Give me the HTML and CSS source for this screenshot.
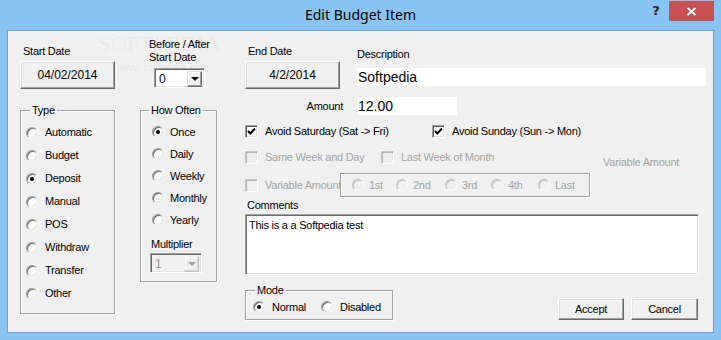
FILE: index.html
```html
<!DOCTYPE html>
<html>
<head>
<meta charset="utf-8">
<link rel="stylesheet" href="styles.css">
</head>
<body>
<div class="window">
  <div class="titlebar">
    <div class="title">Edit Budget Item</div>
    <div class="caption-btns">
      <div class="help">?</div>
      <div class="close">
        <svg width="11" height="9" viewBox="0 0 11 9"><path d="M1.5 1 L9.5 8 M9.5 1 L1.5 8" stroke="#fff" stroke-width="1.8" fill="none"/></svg>
      </div>
    </div>
  </div>

  <div class="client">
    <div class="col-left">
      <div class="top-block start-block">
        <div class="lbl start-lbl">Start Date</div>
        <div class="btn date-btn">04/02/2014</div>
      </div>
      <fieldset class="group type-group">
        <legend>Type</legend>
        <div class="opt"><span class="radio"></span><span>Automatic</span></div>
        <div class="opt"><span class="radio"></span><span>Budget</span></div>
        <div class="opt"><span class="radio checked"></span><span>Deposit</span></div>
        <div class="opt"><span class="radio"></span><span>Manual</span></div>
        <div class="opt"><span class="radio"></span><span>POS</span></div>
        <div class="opt"><span class="radio"></span><span>Withdraw</span></div>
        <div class="opt"><span class="radio"></span><span>Transfer</span></div>
        <div class="opt"><span class="radio"></span><span>Other</span></div>
      </fieldset>
    </div>

    <div class="col-mid">
      <div class="top-block ba-block">
        <div class="lbl ba-lbl">Before / After<br>Start Date</div>
        <div class="combo ba-combo"><span class="combo-val">0</span><span class="combo-btn"><span class="arrow"></span></span></div>
      </div>
      <fieldset class="group often-group">
        <legend>How Often</legend>
        <div class="opt"><span class="radio checked"></span><span>Once</span></div>
        <div class="opt"><span class="radio"></span><span>Daily</span></div>
        <div class="opt"><span class="radio"></span><span>Weekly</span></div>
        <div class="opt"><span class="radio"></span><span>Monthly</span></div>
        <div class="opt"><span class="radio"></span><span>Yearly</span></div>
        <div class="lbl mult-lbl">Multiplier</div>
        <div class="combo mult-combo disabled"><span class="combo-val">1</span><span class="combo-btn"><span class="arrow"></span></span></div>
      </fieldset>
    </div>

    <div class="col-right">
      <div class="row-a">
        <div class="end-col">
          <div class="lbl end-lbl">End Date</div>
          <div class="btn date-btn">4/2/2014</div>
        </div>
        <div class="desc-col">
          <div class="lbl desc-lbl">Description</div>
          <div class="field desc-field">Softpedia</div>
        </div>
      </div>

      <div class="amount-row">
        <div class="lbl amount-lbl">Amount</div>
        <div class="field amount-field">12.00</div>
      </div>

      <div class="chk-row row1">
        <div class="chk-item w187"><span class="checkbox"><svg width="9" height="9" viewBox="0 0 9 9"><polyline points="1,4 3.3,6.5 8,1.5" stroke="#000" stroke-width="1.9" fill="none"/></svg></span><span>Avoid Saturday (Sat -&gt; Fri)</span></div>
        <div class="chk-item"><span class="checkbox"><svg width="9" height="9" viewBox="0 0 9 9"><polyline points="1,4 3.3,6.5 8,1.5" stroke="#000" stroke-width="1.9" fill="none"/></svg></span><span>Avoid Sunday (Sun -&gt; Mon)</span></div>
      </div>

      <div class="chk-row row2">
        <div class="chk-item w136 dis"><span class="checkbox disabled"></span><span>Same Week and Day</span></div>
        <div class="chk-item w222 dis"><span class="checkbox disabled"></span><span>Last Week of Month</span></div>
        <div class="lbl dis var-lbl">Variable Amount</div>
      </div>

      <div class="chk-row row3">
        <div class="chk-item dis"><span class="checkbox disabled"></span><span class="clip-lbl">Variable Amount</span></div>
        <div class="nth-group">
          <div class="nth w44"><span class="radio disabled"></span><span>1st</span></div>
          <div class="nth w49"><span class="radio disabled"></span><span>2nd</span></div>
          <div class="nth w46"><span class="radio disabled"></span><span>3rd</span></div>
          <div class="nth w47"><span class="radio disabled"></span><span>4th</span></div>
          <div class="nth"><span class="radio disabled"></span><span>Last</span></div>
        </div>
      </div>

      <div class="lbl comments-lbl">Comments</div>
      <div class="textarea">This is a a Softpedia test</div>

      <div class="bottom-row">
        <fieldset class="group mode-group">
          <legend>Mode</legend>
          <div class="mode-opts">
            <div class="mode-opt w68"><span class="radio checked"></span><span>Normal</span></div>
            <div class="mode-opt"><span class="radio"></span><span>Disabled</span></div>
          </div>
        </fieldset>
        <div class="actions">
          <div class="btn push accept">Accept</div>
          <div class="btn push cancel">Cancel</div>
        </div>
      </div>
    </div>
  </div>

  <div class="watermark">SOFTPEDIA<sup>™</sup></div>
  <div class="watermark-url">www.softpedia.com</div>
</div>
</body>
</html>
```

FILE: styles.css
```css
html, body {
  margin: 0;
  padding: 0;
}
body {
  background: #8ac4f5;
  font-family: "Liberation Sans", Arial, sans-serif;
  font-size: 11px;
  line-height: 13px;
  letter-spacing: -0.25px;
  color: #000;
}
.window {
  position: relative;
  width: 721px;
  height: 340px;
  background: #8ac4f5;
  overflow: hidden;
}

/* title bar */
.titlebar {
  height: 30px;
  display: grid;
  grid-template-columns: 1fr auto 1fr;
}
.title {
  grid-column: 2;
  font-family: "Noto Sans", "Open Sans", sans-serif;
  font-size: 14px;
  line-height: 30px;
  letter-spacing: 0;
  color: #000;
}
.caption-btns {
  grid-column: 3;
  justify-self: end;
  display: flex;
  margin-top: 1px;
  margin-right: 7px;
  height: 20px;
}
.help {
  width: 26px;
  height: 20px;
  text-align: center;
  font-family: "DejaVu Sans", sans-serif;
  font-weight: bold;
  font-size: 13px;
  line-height: 20px;
  color: #222;
  letter-spacing: 0;
}
.close {
  width: 45px;
  height: 20px;
  background: #c75050;
  display: flex;
  align-items: center;
  justify-content: center;
}

/* client area */
.client {
  width: 705px;
  height: 301px;
  margin-left: 7px;
  border: 1px solid #6f9fd1;
  background: #f0f0f0;
  display: flex;
  align-items: flex-start;
}

.lbl {
  white-space: nowrap;
}
.dis {
  color: #a3a3a3;
}

.col-left {
  margin-left: 12px;
  width: 95px;
}
.top-block {
  height: 73px;
  box-sizing: border-box;
}
.start-block {
  padding-top: 14px;
}
.start-lbl {
  margin-left: 3px;
}
.btn {
  box-sizing: border-box;
  background: #f0f0f0;
  border: 1px solid;
  border-color: #fff #696969 #696969 #fff;
  box-shadow: inset -1px -1px 0 #a0a0a0, inset 1px 1px 0 #e3e3e3;
  text-align: center;
  display: flex;
  align-items: center;
  justify-content: center;
}
.date-btn {
  margin-top: 3px;
  width: 95px;
  height: 28px;
  font-size: 12px;
  letter-spacing: 0;
}

/* group boxes */
.group {
  margin: 0;
  padding: 0;
  min-width: 0;
  box-sizing: border-box;
  border: 1px solid #a0a0a0;
  box-shadow: inset 1px 1px 0 #fff, 1px 1px 0 #fff;
}
.group legend {
  padding: 0 2px;
  line-height: 13px;
  height: 13px;
}
.type-group {
  width: 95px;
  padding-top: 4px;
  padding-bottom: 8px;
}
.type-group legend {
  margin-left: 9px;
}
.type-group .opt {
  height: 23px;
  display: flex;
  align-items: center;
  padding-left: 5px;
}
.type-group .radio {
  margin-right: 7px;
}

.col-mid {
  margin-left: 25px;
  width: 77px;
}
.ba-block {
  padding-top: 7px;
}
.ba-lbl {
  margin-left: 9px;
}
.often-group {
  width: 77px;
  padding-top: 4px;
  padding-bottom: 8px;
}
.often-group legend {
  margin-left: 8px;
}
.often-group .opt {
  height: 22px;
  display: flex;
  align-items: center;
  padding-left: 11px;
}
.often-group .radio {
  margin-right: 6px;
}
.mult-lbl {
  margin-top: 7px;
  margin-left: 10px;
}

/* radios */
.radio {
  position: relative;
  display: inline-block;
  flex: none;
  width: 12px;
  height: 12px;
  box-sizing: border-box;
  border-radius: 50%;
  background: #fff;
  border: 1px solid;
  border-color: #9a9a9a #f4f4f4 #f4f4f4 #9a9a9a;
  box-shadow: inset 1px 1px 0 #6d6d6d, inset -1px -1px 0 #e3e3e3;
}
.radio.checked::after {
  content: "";
  position: absolute;
  left: 3px;
  top: 3px;
  width: 4px;
  height: 4px;
  border-radius: 50%;
  background: #000;
}
.radio.disabled {
  background: #f0f0f0;
  border-color: #bdbdbd #fafafa #fafafa #bdbdbd;
  box-shadow: inset 1px 1px 0 #c8c8c8, inset -1px -1px 0 #ececec;
}

/* combo */
.combo {
  display: flex;
  box-sizing: border-box;
  height: 20px;
  background: #fff;
  border: 1px solid;
  border-color: #a0a0a0 #fff #fff #a0a0a0;
  box-shadow: inset 1px 1px 0 #696969, inset -1px -1px 0 #e3e3e3;
  padding: 2px;
}
.combo-val {
  flex: 1;
  padding-left: 2px;
  line-height: 16px;
  font-size: 12px;
  letter-spacing: 0;
}
.combo-btn {
  width: 15px;
  height: 16px;
  box-sizing: border-box;
  background: #f0f0f0;
  border: 1px solid;
  border-color: #e3e3e3 #696969 #696969 #e3e3e3;
  box-shadow: inset -1px -1px 0 #a0a0a0, inset 1px 1px 0 #fff;
  display: flex;
  align-items: center;
  justify-content: center;
}
.arrow {
  width: 0;
  height: 0;
  border-left: 4px solid transparent;
  border-right: 4px solid transparent;
  border-top: 4px solid #000;
}
.ba-combo {
  margin-top: 4px;
  margin-left: 14px;
  width: 51px;
}
.mult-combo {
  margin-top: 2px;
  margin-left: 9px;
  width: 52px;
}
.combo.disabled {
  background: #f0f0f0;
}
.combo.disabled .combo-val {
  color: #9d94a5;
}
.combo.disabled .combo-btn {
  border-color: #f0f0f0 #c4c4c4 #c4c4c4 #f0f0f0;
  box-shadow: inset -1px -1px 0 #d8d8d8, inset 1px 1px 0 #fff;
}
.combo.disabled .arrow {
  border-top-color: #a0a0a0;
}

/* right column */
.col-right {
  margin-left: 28px;
  width: 461px;
  padding-top: 14px;
}
.row-a {
  display: flex;
  align-items: flex-start;
}
.end-col {
  width: 95px;
}
.end-lbl {
  margin-left: 3px;
}
.desc-col {
  margin-left: 17px;
  width: 349px;
  padding-top: 3px;
}
.field {
  background: #fff;
  box-sizing: border-box;
  height: 18px;
  font-size: 14px;
  line-height: 18px;
  letter-spacing: 0;
  padding-left: 1px;
}
.desc-field {
  margin-top: 7px;
}
.amount-row {
  display: flex;
  align-items: center;
  margin-top: 8px;
}
.amount-lbl {
  width: 98px;
  text-align: right;
}
.amount-field {
  margin-left: 14px;
  width: 100px;
}

.chk-row {
  display: flex;
  align-items: center;
}
.row1 {
  margin-top: 9px;
  height: 14px;
}
.row2 {
  margin-top: 12px;
  height: 14px;
  align-items: flex-start;
}
.row2 .chk-item {
  height: 14px;
}
.var-lbl {
  margin-top: 6px;
}
.row3 {
  margin-top: 9px;
  height: 24px;
}
.chk-item {
  display: flex;
  align-items: center;
  white-space: nowrap;
}
.w187 { width: 187px; }
.w136 { width: 136px; }
.w222 { width: 222px; }
.w44 { width: 44px; }
.w49 { width: 49px; }
.w46 { width: 46px; }
.w47 { width: 47px; }
.w68 { width: 68px; }

.checkbox {
  flex: none;
  width: 13px;
  height: 13px;
  box-sizing: border-box;
  margin-right: 7px;
  background: #fff;
  border: 1px solid;
  border-color: #a0a0a0 #fff #fff #a0a0a0;
  box-shadow: inset 1px 1px 0 #555, inset -1px -1px 0 #e3e3e3;
  display: flex;
  align-items: center;
  justify-content: center;
}
.checkbox.disabled {
  background: #f0f0f0;
  border-color: #c4c4c4 #fff #fff #c4c4c4;
  box-shadow: inset 1px 1px 0 #b5b5b5, inset -1px -1px 0 #ececec;
}
.clip-lbl {
  display: inline-block;
  width: 75px;
  overflow: hidden;
}
.nth-group {
  box-sizing: border-box;
  width: 250px;
  height: 24px;
  border: 1px solid #a0a0a0;
  box-shadow: inset 1px 1px 0 #fff, 1px 1px 0 #fff;
  display: flex;
  align-items: center;
  padding-left: 11px;
  color: #a3a3a3;
}
.nth {
  display: flex;
  align-items: center;
}
.nth .radio {
  margin-right: 5px;
}

.comments-lbl {
  margin-top: 2px;
  margin-left: 2px;
}
.textarea {
  margin-top: 2px;
  width: 454px;
  height: 61px;
  box-sizing: border-box;
  background: #fff;
  border: 1px solid;
  border-color: #a0a0a0 #fff #fff #a0a0a0;
  box-shadow: inset 1px 1px 0 #696969, inset -1px -1px 0 #e3e3e3;
  padding: 4px 3px;
  line-height: 13px;
}

.bottom-row {
  margin-top: 9px;
  display: flex;
  align-items: flex-end;
}
.mode-group {
  width: 148px;
  padding-top: 3px;
  padding-bottom: 5px;
}
.mode-group legend {
  margin-left: 9px;
}
.mode-opts {
  display: flex;
  height: 14px;
  align-items: center;
  padding-left: 7px;
}
.mode-opt {
  display: flex;
  align-items: center;
}
.mode-opt .radio {
  margin-right: 7px;
}
.actions {
  margin-left: auto;
  margin-right: 8px;
  display: flex;
}
.push {
  height: 22px;
}
.accept {
  width: 66px;
}
.cancel {
  width: 67px;
  margin-left: 7px;
}

/* watermark overlay (faint, does not hide the labels under it) */
.watermark {
  position: absolute;
  left: 98px;
  top: 33px;
  font-family: "Liberation Serif", serif;
  font-size: 22px;
  line-height: 22px;
  letter-spacing: 0.5px;
  color: rgba(0, 0, 0, 0.05);
  pointer-events: none;
}
.watermark sup {
  font-size: 8px;
  vertical-align: top;
  line-height: 8px;
}
.watermark-url {
  position: absolute;
  left: 118px;
  top: 63px;
  font-family: "Liberation Sans", sans-serif;
  font-size: 10px;
  line-height: 10px;
  letter-spacing: 0.3px;
  color: rgba(0, 0, 0, 0.07);
  pointer-events: none;
}
```
